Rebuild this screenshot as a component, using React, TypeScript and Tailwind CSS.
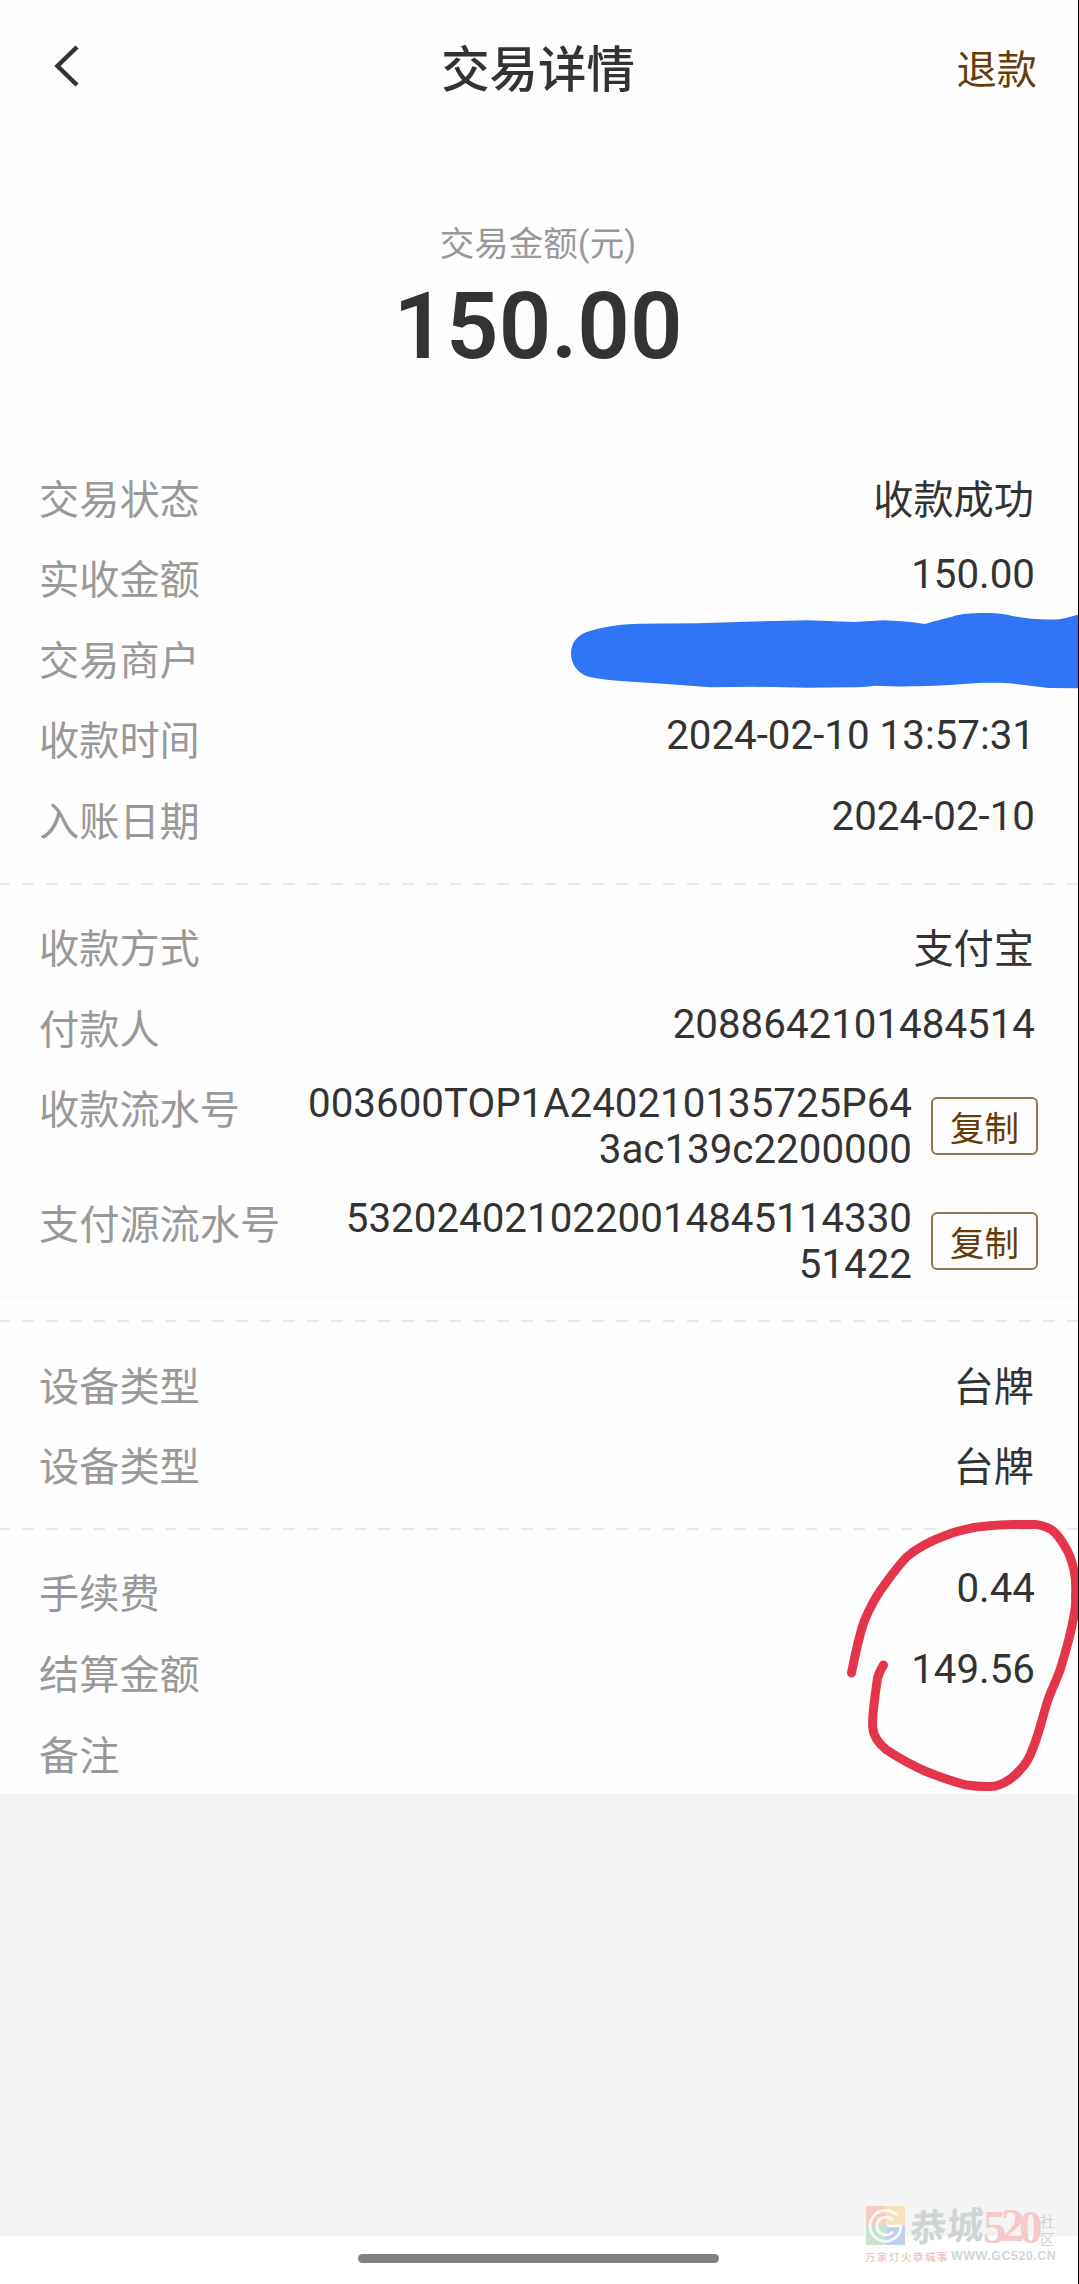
import type { ReactNode } from "react";

const cjk = 'font-["Noto_Sans_CJK_SC",sans-serif]';

function Row({ label, children, tall = false, rule = "border-transparent" }: { label: string; children?: ReactNode; tall?: boolean; rule?: string }) {
  return (
    <div
      className={`flex shrink-0 items-start justify-between border-b pl-[39px] pr-[44px] pt-[10px] ${rule} ${
        tall ? "h-[114.9px]" : "h-[80.64px]"
      }`}
    >
      <span className={`${cjk} whitespace-nowrap text-[40.2px] leading-[58px] text-[#999]`}>{label}</span>
      {children}
    </div>
  );
}

function Num({ children }: { children: string }) {
  return <span className="pt-[3px] text-[40.3px] leading-[47px] text-[#333]">{children}</span>;
}

function Han({ children }: { children: string }) {
  return <span className={`${cjk} pr-px text-[40.2px] leading-[58px] text-[#333]`}>{children}</span>;
}

function Copyable({ lines }: { lines: string[] }) {
  return (
    <div className="-mr-[4px] flex items-start">
      <div className="pt-[3px] text-right text-[40.3px] leading-[46px] text-[#333]">
        {lines.map((l) => (
          <div key={l}>{l}</div>
        ))}
      </div>
      <button
        className={`${cjk} ml-[19px] mr-px mt-[19px] flex h-[58px] w-[107px] items-center justify-center rounded-[6px] border-2 border-[#94754e] text-[34.5px] leading-[50px] text-[#663c08]`}
      >
        复制
      </button>
    </div>
  );
}

function Divider() {
  return (
    <div className="flex h-[46.5px] shrink-0 items-center">
      <div className="h-[2px] w-full bg-[repeating-linear-gradient(90deg,#e9e9e9_0_11.8px,transparent_11.8px_23.74px)] bg-[position:-1.5px_0] bg-[length:1200px_2px]" />
    </div>
  );
}

function Watermark() {
  return (
    <div className="absolute left-[865px] top-[2202px] h-[62px] w-[194px]">
      <svg className="absolute left-[1px] top-[4px]" width="40" height="40" viewBox="0 0 40 40">
        <path d="M0 0H20V20H0Z" fill="#f4cdc6" />
        <path d="M20 0H39V20H20Z" fill="#f7e2bd" />
        <path d="M0 20H20V39H0Z" fill="#c6e5cf" />
        <path d="M20 20H39V39H20Z" fill="#bfd0e8" />
        <path d="M31 9.500A15.500 15.500 0 1 0 35 20H21M27 14.500A9 9 0 1 0 27 25.500" fill="none" stroke="#fafafa" strokeWidth="2.600" />
      </svg>
      <span className={`${cjk} absolute left-[45px] top-0 -rotate-3 -skew-x-6 whitespace-nowrap text-[37px] font-bold leading-[44px] text-[#cfd4d5]`}>
        恭城
      </span>
      <span className='absolute left-[118px] top-[4px] whitespace-nowrap font-["Liberation_Serif",serif] text-[47px] font-bold leading-[42px] tracking-[-5.500px] text-[#f4c9c9]'>
        5<span className="relative -top-[2px]">2</span>0
      </span>
      <span className={`${cjk} absolute left-[175px] top-[10px] w-[16px] text-[14.500px] leading-[17.500px] text-[#cdd2d3]`}>社区</span>
      <span className={`${cjk} absolute left-0 top-[47px] whitespace-nowrap text-[10.500px] font-medium leading-[15px] tracking-[1.500px] text-[#f3bfbf]`}>
        万家灯火恭城事
      </span>
      <span className='absolute left-[86px] top-[47px] whitespace-nowrap font-["Liberation_Sans",sans-serif] text-[12.500px] font-bold leading-[15px] tracking-[0.500px] text-[#d2d7d9]'>
        WWW.GC520.CN
      </span>
    </div>
  );
}

export default function App() {
  return (
    <div className='relative flex h-[2284px] w-[1079px] flex-col overflow-hidden bg-[#fefefe] font-[Roboto,"Noto_Sans_CJK_SC",sans-serif]'>
      <header className="relative flex h-[132px] shrink-0 items-center justify-center pr-[3px]">
        <svg className="absolute left-[52px] top-[44px]" width="30" height="44" viewBox="0 0 30 44" fill="none" stroke="#333" strokeWidth="4.500">
          <path d="M25 3L5.500 22L25 41" />
        </svg>
        <h1 className={`${cjk} text-[48.400px] font-medium leading-[70px] text-[#333]`}>交易详情</h1>
        <span className={`${cjk} absolute right-[42px] top-[38px] text-[40.200px] leading-[58px] text-[#663c08]`}>退款</span>
      </header>

      <section className="flex h-[325.5px] shrink-0 flex-col items-center pr-[3px] pt-[87px]">
        <div className="text-[34.500px] leading-[50px] text-[#999]">交易金额(元)</div>
        <div className="pt-[4px] text-[92px] font-semibold leading-[108px] text-[#333]">150.00</div>
      </section>

      <Row label="交易状态"><Han>收款成功</Han></Row>
      <Row label="实收金额" rule="border-[#fbfbfb]"><Num>150.00</Num></Row>
      <Row label="交易商户" rule="border-[#fbfbfb]" />
      <Row label="收款时间"><Num>2024-02-10 13:57:31</Num></Row>
      <Row label="入账日期" rule="border-[#fafafa]"><Num>2024-02-10</Num></Row>
      <Divider />
      <Row label="收款方式" rule="border-[#fbfbfb]"><Han>支付宝</Han></Row>
      <Row label="付款人"><Num>2088642101484514</Num></Row>
      <Row label="收款流水号" tall>
        <Copyable lines={["003600TOP1A240210135725P64", "3ac139c2200000"]} />
      </Row>
      <Row label="支付源流水号" tall rule="border-[#f5f5f5]">
        <Copyable lines={["5320240210220014845114330", "51422"]} />
      </Row>
      <Divider />
      <Row label="设备类型"><Han>台牌</Han></Row>
      <Row label="设备类型" rule="border-[#fafafa]"><Han>台牌</Han></Row>
      <Divider />
      <Row label="手续费" rule="border-[#fbfbfb]"><Num>0.44</Num></Row>
      <Row label="结算金额"><Num>149.56</Num></Row>
      <Row label="备注" />

      <div className="grow bg-[#f4f4f4]" />
      <footer className="flex h-[48px] shrink-0 justify-center bg-white pr-[2px] pt-[17.500px]">
        <div className="h-[9.500px] w-[361px] rounded-full bg-[#808080]" />
      </footer>

      <Watermark />

      {/* Hand-drawn marks over the receipt */}
      <svg className="pointer-events-none absolute left-0 top-0" width="1079" height="2284" viewBox="0 0 1079 2284">
        <path
          fill="#2f75f6"
          d="M571 653.500C571 643 577 634 590.700 630.700C607 626 625 624 639 623.700L697.400 623.300L754 621.500L807.600 620.300L854 622L883 620.300C898 620.500 912 622 924.700 624C934 621 943 619 952 616.700C962 613.500 973 613 983 613C992 613 999 613 1007 614.700C1015 616.500 1023 618 1031 618.700C1040 619.500 1050 619.800 1059 619.300C1067 618.300 1072 616 1079 614.500V688.300L1048.600 688C1032 686 1016 683.500 1000 682.700H983C961 684 940 686 918 686.300C903 686.500 890 686.500 875 685.700C866 686.800 858 687.200 849 687.300L807.600 687.700L752.500 686.700L711 687.300C697 686.500 684 685 670 684.300L620 681C610 680 600 679.500 590.700 677.300C578 674.500 571 664 571 653.500Z"
        />
        <path
          fill="none"
          stroke="#e5354a"
          strokeWidth="9"
          strokeLinecap="round"
          strokeLinejoin="round"
          d="M851.500 1673C855 1655 859 1637 863.500 1623C869 1609 877 1594 886.700 1581.700C893 1573 899 1565 906.700 1557C918 1547 933 1540 946.700 1535C960 1530 973 1527 986.700 1526C996 1525 1005 1524.500 1013 1524.500H1035C1041 1525 1047 1527 1052 1530C1058 1535 1062 1541 1065.500 1547.500C1070 1554 1072 1562 1074 1570C1076 1579 1076 1588 1075.500 1597C1076 1605 1075 1612 1073 1621C1070 1637 1065 1654 1060 1670C1056 1682 1050 1692 1046.700 1704C1042 1719 1039 1733 1033 1748C1030 1757 1026 1764 1020 1770C1014 1777 1007 1782 1000 1784.500C995 1787 991 1786.800 986.700 1786.500C980 1786.500 973 1786 966.700 1785C953 1782 940 1777 926.700 1771.700C913 1766 899 1758 886.700 1750C878 1743 873 1736 872.700 1727C872 1717 874 1706 875 1696L877.500 1678C879 1673 881 1669 883.500 1665"
        />
      </svg>
      <div className="absolute right-0 top-0 h-full w-px bg-black" />
    </div>
  );
}
